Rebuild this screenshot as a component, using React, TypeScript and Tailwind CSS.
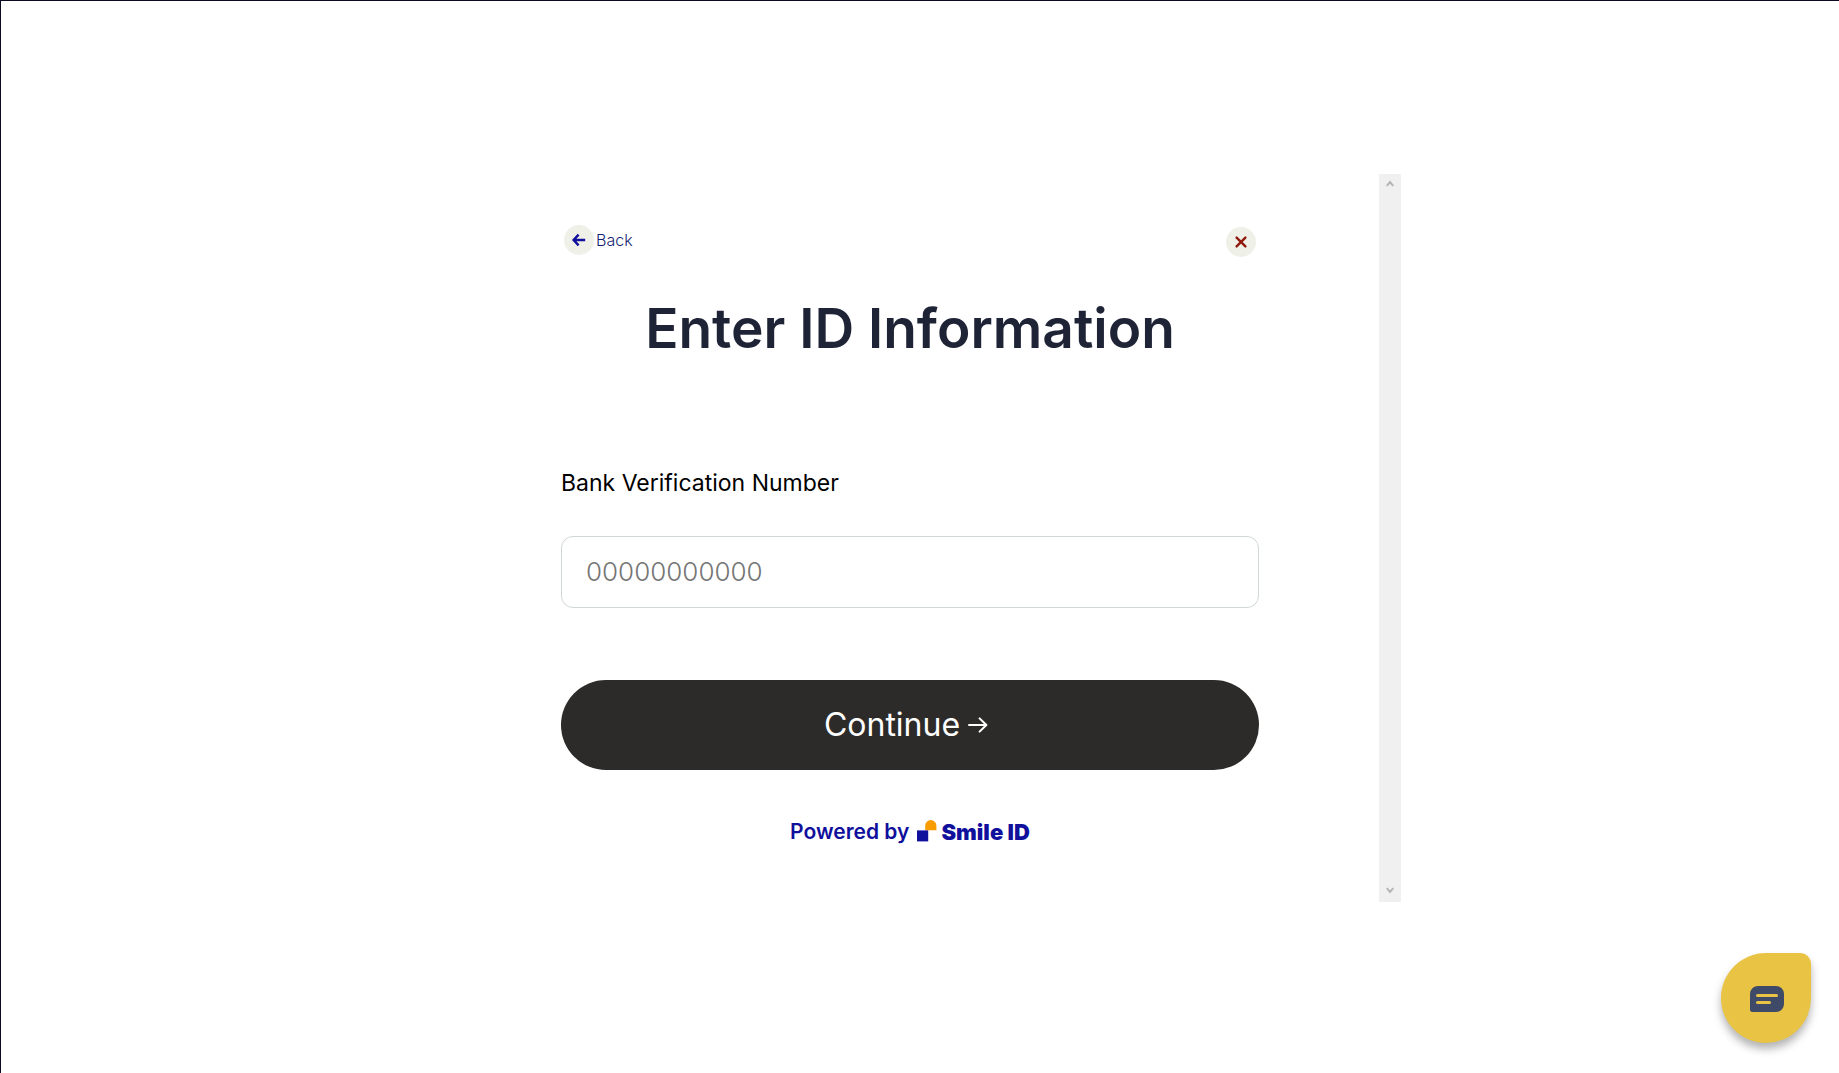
import { useState } from 'react'
import type { FormEvent } from 'react'

function BackIcon() {
  return (
    <svg width="30" height="30" viewBox="0 0 30 30" fill="none" aria-hidden="true">
      <circle cx="15" cy="15" r="15" fill="#EFF0E7" />
      <path d="M14.6 9.6L9.6 15l5 5.4M9.6 15H21.2" stroke="#11109C" strokeWidth="2.4" />
    </svg>
  )
}

function CloseIcon() {
  return (
    <svg width="30" height="30" viewBox="0 0 30 30" fill="none" aria-hidden="true">
      <circle cx="15" cy="15" r="15" fill="#EFF0E7" />
      <path d="M10.6 10.6l8.8 8.8M19.4 10.6l-8.8 8.8" stroke="#91190E" strokeWidth="2.4" strokeLinecap="round" />
    </svg>
  )
}

function ArrowRight() {
  return (
    <svg width="20" height="16" viewBox="0 0 20 16" fill="none" aria-hidden="true">
      <path
        d="M1 8h17.4M11.6 1.4L18.4 8l-6.8 6.6"
        stroke="currentColor"
        strokeWidth="2"
        strokeLinecap="round"
        strokeLinejoin="round"
      />
    </svg>
  )
}

function SmileMark() {
  return (
    <svg width="20" height="22" viewBox="0 0 20 22" aria-hidden="true">
      <path d="M8.2 10.2V5.6a5.6 5.6 0 0 1 11.2 0v4.6z" fill="#F89C00" />
      <rect x="0" y="10.4" width="11.2" height="11" fill="#11109C" />
    </svg>
  )
}

function ScrollTrack() {
  return (
    <div className="flex w-[22px] shrink-0 flex-col items-center justify-between bg-[#f0f0f0] pt-1.5 pb-2" aria-hidden="true">
      <svg width="8" height="7" viewBox="0 0 8 7">
        <path d="M0.8 5.8L4 2l3.2 3.8" fill="none" stroke="#b4b4b4" strokeWidth="2" />
      </svg>
      <svg width="8" height="7" viewBox="0 0 8 7">
        <path d="M0.8 1.2L4 5l3.2-3.8" fill="none" stroke="#b4b4b4" strokeWidth="2" />
      </svg>
    </div>
  )
}

function ChatButton() {
  return (
    <button
      type="button"
      aria-label="Open chat"
      className="fixed right-7 bottom-[30px] flex h-[90px] w-[90px] items-center justify-center rounded-[45px] rounded-tr-[11px] bg-[#e9c344] pt-0.5 pl-0.5 shadow-[0_6px_8px_rgba(0,0,0,0.3)]"
    >
      <svg width="34" height="26" viewBox="0 0 34 26" aria-hidden="true">
        <path d="M8 0h18a8 8 0 0 1 8 8v10a8 8 0 0 1-8 8H2.5A2.5 2.5 0 0 1 0 23.5V8a8 8 0 0 1 8-8z" fill="#3E4A68" />
        <path d="M7.5 9.5h19M7.5 16.5h12" stroke="#e9c344" strokeWidth="3" strokeLinecap="round" />
      </svg>
    </button>
  )
}

export default function App() {
  const [bvn, setBvn] = useState('')

  const handleSubmit = (e: FormEvent) => {
    e.preventDefault()
  }

  return (
    <div className="min-h-screen border-t border-l border-[#0a0a20] bg-white px-4 pt-[173px] font-['Inter','Liberation_Sans',sans-serif]">
      <div className="mx-auto flex min-h-[728px] w-full max-w-[962px]">
        <main className="flex-1 pt-[51px] pr-[120px] pl-[122px]">
          <div className="flex items-start justify-between px-[3px]">
            <button type="button" className="flex items-center gap-[2px] text-[16px] font-light text-[#151f72]">
              <BackIcon />
              Back
            </button>
            <button type="button" aria-label="Close" className="pt-0.5">
              <CloseIcon />
            </button>
          </div>

          <h1 className="mt-[37px] text-center text-[55px] leading-[68px] font-semibold text-[#1e2336]">
            Enter ID Information
          </h1>

          <form onSubmit={handleSubmit} className="mt-[105px]">
            <label htmlFor="bvn" className="block text-[23px] leading-8 text-black">
              Bank Verification Number
            </label>
            <input
              id="bvn"
              type="text"
              inputMode="numeric"
              maxLength={11}
              placeholder="00000000000"
              value={bvn}
              onChange={e => setBvn(e.target.value)}
              className="mt-[37px] block h-[72px] w-full rounded-xl border border-[#d1d8d6] px-6 pb-0.5 text-[26px] font-light text-black placeholder:text-[#757575]"
            />
            <button
              type="submit"
              className="mt-[72px] flex h-[90px] w-full items-center justify-center gap-2 rounded-full bg-[#2d2b2a] pr-2 text-[32px] text-white"
            >
              Continue
              <ArrowRight />
            </button>
          </form>

          <p className="mt-12 flex items-center justify-center gap-2 text-[#11109C]">
            <span className="text-[21px] leading-7 font-semibold">Powered by</span>
            <span className="flex items-center gap-1">
              <span className="pb-0.5">
                <SmileMark />
              </span>
              <span className="text-[22px] leading-7 font-black">Smile ID</span>
            </span>
          </p>
        </main>
        <ScrollTrack />
      </div>
      <ChatButton />
    </div>
  )
}
